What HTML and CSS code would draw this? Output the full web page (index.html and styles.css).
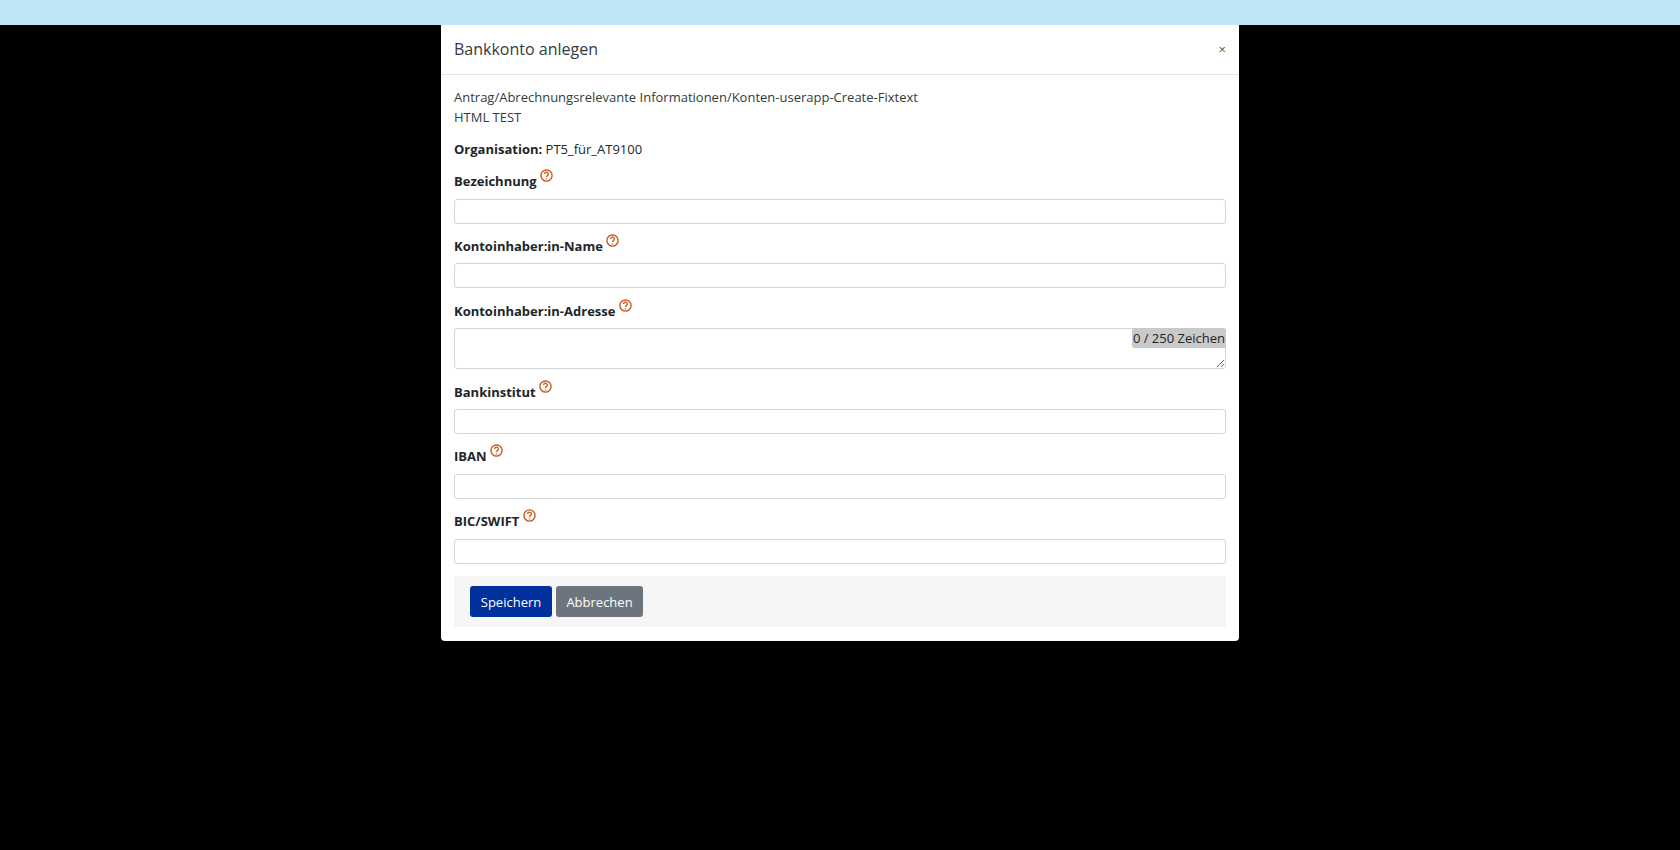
FILE: index.html
```html
<!DOCTYPE html>
<html lang="de">
<head>
<meta charset="utf-8">
<title>Bankkonto anlegen</title>
<link rel="stylesheet" href="styles.css">
</head>
<body>
<div class="topbar"></div>
<div class="modal">
  <div class="modal-header">
    <h5 class="modal-title">Bankkonto anlegen</h5>
    <span class="close">×</span>
  </div>
  <div class="modal-body">
    <p class="intro">Antrag/Abrechnungsrelevante Informationen/Konten-userapp-Create-Fixtext<br>HTML TEST</p>
    <p class="org"><b>Organisation:</b> PT5_für_AT9100</p>
    <div class="group">
      <label class="label">Bezeichnung <svg class="help" viewBox="0 0 14 14"><circle cx="7" cy="7" r="6" /><path d="M5 5.4a2 2 0 1 1 3 1.7c-.7.4-1 .8-1 1.6" /><path d="M7 10v1.2" /></svg></label>
      <input class="field" type="text">
    </div>
    <div class="group">
      <label class="label">Kontoinhaber:in-Name <svg class="help" viewBox="0 0 14 14"><circle cx="7" cy="7" r="6" /><path d="M5 5.4a2 2 0 1 1 3 1.7c-.7.4-1 .8-1 1.6" /><path d="M7 10v1.2" /></svg></label>
      <input class="field" type="text">
    </div>
    <div class="group">
      <label class="label">Kontoinhaber:in-Adresse <svg class="help" viewBox="0 0 14 14"><circle cx="7" cy="7" r="6" /><path d="M5 5.4a2 2 0 1 1 3 1.7c-.7.4-1 .8-1 1.6" /><path d="M7 10v1.2" /></svg></label>
      <div class="area-wrap">
        <textarea class="area"></textarea>
        <span class="counter">0 / 250 Zeichen</span>
      </div>
    </div>
    <div class="group">
      <label class="label">Bankinstitut <svg class="help" viewBox="0 0 14 14"><circle cx="7" cy="7" r="6" /><path d="M5 5.4a2 2 0 1 1 3 1.7c-.7.4-1 .8-1 1.6" /><path d="M7 10v1.2" /></svg></label>
      <input class="field" type="text">
    </div>
    <div class="group">
      <label class="label">IBAN <svg class="help" viewBox="0 0 14 14"><circle cx="7" cy="7" r="6" /><path d="M5 5.4a2 2 0 1 1 3 1.7c-.7.4-1 .8-1 1.6" /><path d="M7 10v1.2" /></svg></label>
      <input class="field" type="text">
    </div>
    <div class="group">
      <label class="label">BIC/SWIFT <svg class="help" viewBox="0 0 14 14"><circle cx="7" cy="7" r="6" /><path d="M5 5.4a2 2 0 1 1 3 1.7c-.7.4-1 .8-1 1.6" /><path d="M7 10v1.2" /></svg></label>
      <input class="field" type="text">
    </div>
    <div class="actions">
      <button class="btn btn-primary" type="button">Speichern</button>
      <button class="btn btn-secondary" type="button">Abbrechen</button>
    </div>
  </div>
</div>
</body>
</html>
```
FILE: styles.css
```css
* { box-sizing: border-box; }
html, body { height: 100%; }
body {
  margin: 0;
  background: #000;
  font-family: "Open Sans", sans-serif;
  font-size: 13px;
  line-height: 20px;
  color: #212529;
  overflow: hidden;
}
.topbar { height: 25px; background: #bde6f7; }
.modal {
  width: 798px;
  height: 616px;
  margin: 0 auto;
  background: #fff;
  border-radius: 0 0 4px 4px;
  display: flex;
  flex-direction: column;
}
.modal-header {
  height: 50px;
  flex: none;
  padding: 0 13px 2px;
  border-bottom: 1px solid #e4e4e4;
  display: flex;
  align-items: center;
  justify-content: space-between;
}
.modal-title { margin: 0; font-size: 16px; font-weight: 400; line-height: 24px; color: #343a40; }
.close { font-size: 13px; color: #555; }
.modal-body { padding: 12px 13px 13px; }
.intro { margin: 0 0 12px; color: #343a40; }
.org { margin: 0 0 9.05px; }
.group { margin-bottom: 9.2px; }
.label {
  display: block;
  font-weight: 700;
  height: 24px;
  padding-top: 1px;
  line-height: 24px;
  margin-bottom: 6.55px;
}
.help {
  width: 13px;
  height: 13px;
  fill: none;
  stroke: #cc5a1e;
  stroke-width: 1.5;
  vertical-align: 4px;
}
.field {
  display: block;
  width: 100%;
  height: 25px;
  border: 1px solid #ced4da;
  border-radius: 3px;
  background: #fff;
  padding: 0 8px;
}
.area-wrap { position: relative; }
.area {
  display: block;
  width: 100%;
  height: 41.25px;
  border: 1px solid #ced4da;
  border-radius: 3px;
  background: #fff;
  padding: 0 8px;
  font: inherit;
}
.counter {
  position: absolute;
  top: 0;
  right: 0;
  height: 20px;
  padding: 0 1px;
  background: #c9c9c9;
  border-radius: 3px 3px 0 3px;
  line-height: 20px;
}
.actions {
  background: #f6f6f6;
  height: 51px;
  margin-top: 12.8px;
  padding: 10px 16px;
  display: flex;
  gap: 4px;
}
.btn {
  height: 31px;
  border: 0;
  border-radius: 3px;
  font: inherit;
  color: #fff;
  padding: 0 10px;
}
.btn-primary { background: #00309c; width: 82px; }
.btn-secondary { background: #6c757d; width: 87px; }
```
